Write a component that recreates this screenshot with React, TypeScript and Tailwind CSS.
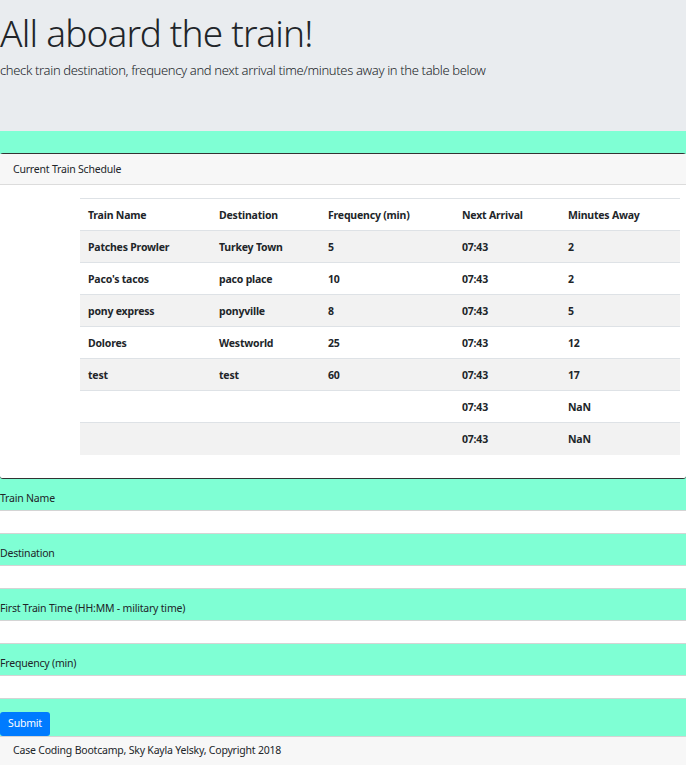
import React from "react";

const rows = [
  ["Patches Prowler", "Turkey Town", "5", "07:43", "2"],
  ["Paco's tacos", "paco place", "10", "07:43", "2"],
  ["pony express", "ponyville", "8", "07:43", "5"],
  ["Dolores", "Westworld", "25", "07:43", "12"],
  ["test", "test", "60", "07:43", "17"],
  ["", "", "", "07:43", "NaN"],
  ["", "", "", "07:43", "NaN"],
];

const font = { fontFamily: '"Noto Sans", "Open Sans", sans-serif' };

function Field({ label }: { label: string }) {
  return (
    <div>
      <div className="h-[31px] flex items-end pb-[3px] text-[10.5px] tracking-[-0.2px] text-[#212529]">{label}</div>
      <div className="h-[24px] bg-white border-y border-[#d4d4d4]"></div>
    </div>
  );
}

export default function App() {
  return (
    <div className="w-[686px] h-[765px] overflow-hidden bg-[#7fffd4] text-[#212529]" style={font}>
      <div className="h-[131px] bg-[#e9ecef] pt-[9px]">
        <h1 className="text-[37px] leading-[48px] font-light tracking-[-0.8px]">All aboard the train!</h1>
        <p className="text-[13px] leading-[18px] font-light mt-[4px] tracking-[-0.35px]">
          check train destination, frequency and next arrival time/minutes away in the table below
        </p>
      </div>
      <div className="h-[22px]"></div>
      <div className="bg-white border-y border-[#333] rounded-[3px]">
        <div className="h-[31px] bg-[#f7f7f7] border-b border-[#dcdcdc] flex items-center px-[13px] pt-[1px] text-[10.5px] tracking-[-0.2px]">
          Current Train Schedule
        </div>
        <div className="pt-[13px] pb-[23px] pl-[80px] pr-[6px]">
          <table className="w-full border-collapse text-[10.5px] tracking-[-0.2px] font-bold">
            <thead>
              <tr className="h-[32px] border-t border-[#dee2e6]">
                <th className="text-left px-2 pt-[2px] w-[131px]">Train Name</th>
                <th className="text-left px-2 pt-[2px] w-[109px]">Destination</th>
                <th className="text-left px-2 pt-[2px] w-[134px]">Frequency (min)</th>
                <th className="text-left px-2 pt-[2px] w-[106px]">Next Arrival</th>
                <th className="text-left px-2 pt-[2px]">Minutes Away</th>
              </tr>
            </thead>
            <tbody>
              {rows.map((r, i) => (
                <tr
                  key={i}
                  className={
                    "h-[32px] border-t border-[#dee2e6] " + (i % 2 === 0 ? "bg-[#f2f2f2]" : "bg-white")
                  }
                >
                  {r.map((c, j) => (
                    <td key={j} className="px-2 pt-[2px]">
                      {c}
                    </td>
                  ))}
                </tr>
              ))}
            </tbody>
          </table>
        </div>
      </div>
      <Field label="Train Name" />
      <Field label="Destination" />
      <Field label="First Train Time (HH:MM - military time)" />
      <Field label="Frequency (min)" />
      <div className="h-[37px] flex items-end">
        <button className="h-[24px] w-[50px] bg-[#007bff] text-white text-[10.5px] tracking-[-0.2px] rounded-[3px]">Submit</button>
      </div>
      <div className="h-[29px] bg-[#f7f7f7] border-t border-[#d4d4d4] flex items-center px-[13px] pt-[1px] text-[10.5px] tracking-[-0.2px]">
        Case Coding Bootcamp, Sky Kayla Yelsky, Copyright 2018
      </div>
    </div>
  );
}
